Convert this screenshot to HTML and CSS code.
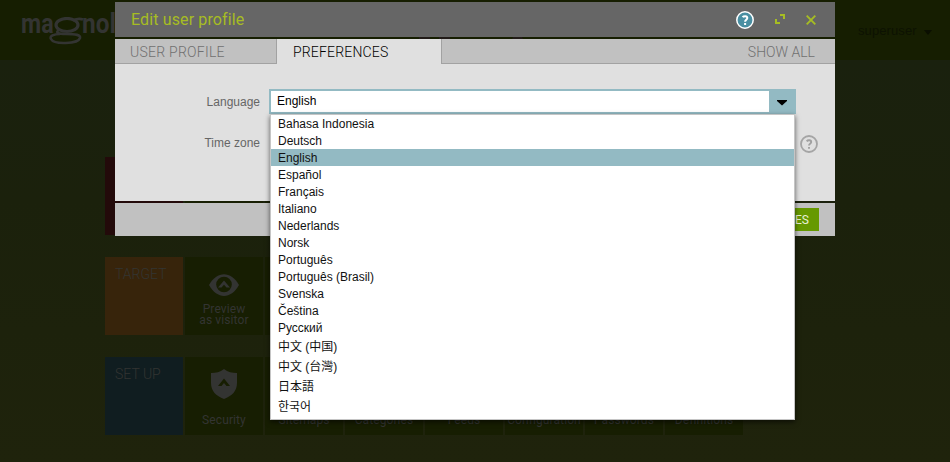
FILE: index.html
```html
<!DOCTYPE html>
<html lang="en">
<head>
<meta charset="utf-8">
<title>Edit user profile</title>
<link rel="stylesheet" href="styles.css">
</head>
<body>
<header class="topbar">
  <div class="logo" aria-label="magnolia"><span class="logo-ma">ma</span><span class="logo-g"><svg width="36" height="28" viewBox="0 0 36 28"><g fill="none" stroke="#333432"><ellipse cx="19" cy="8" rx="11" ry="6.500" stroke-width="3.200"/><path d="M25 3.500C28 2 32 1.500 35 2.500" stroke-width="2.600"/><path d="M11 13C7 15.500 10 17 18 17C28 17 33 18 32 21C30 27 6 28 3 22C1 19 6 17 12 17" stroke-width="2.600"/></g></svg></span><span class="logo-rest">nolia</span></div>
  <div class="shell-icons"><i></i><i></i><i></i></div>
  <div class="user">superuser<span class="caret"></span></div>
</header>
<main class="launcher">
  <section class="row">
    <div class="tile edit"></div><div class="tile"></div><div class="tile"></div>
  </section>
  <section class="row">
    <div class="tile group target">TARGET</div>
    <div class="tile"><svg class="icon" width="30" height="22" viewBox="0 0 30 22"><path d="M0 11C8-3.500 22-3.500 30 11C22 25.500 8 25.500 0 11Z" fill="#333432"/><circle cx="15" cy="10.500" r="7.800" fill="#171e02"/><path d="M9 13.500L15 6.500L21 13.500H17.500L15 10.800L12.500 13.500Z" fill="#333432"/></svg><span>Preview</span><span>as visitor</span></div>
    <div class="tile"></div>
  </section>
  <section class="row">
    <div class="tile group setup">SET UP</div>
    <div class="tile single"><svg class="icon" width="26" height="30" viewBox="0 0 26 30"><path d="M13 0C9 3 5 4 0 4V14C0 22 5 27 13 30C21 27 26 22 26 14V4C21 4 17 3 13 0Z" fill="#333432"/><path d="M7 17L13 9.500L19 17H15.500L13 14L10.500 17Z" fill="#171e02"/></svg><span>Security</span></div>
    <div class="tile single"><span>Sitemaps</span></div>
    <div class="tile single"><span>Categories</span></div>
    <div class="tile single"><span>Feeds</span></div>
    <div class="tile single"><span>Configuration</span></div>
    <div class="tile single"><span>Passwords</span></div>
    <div class="tile single"><span>Definitions</span></div>
  </section>
</main>
<div class="dialog" role="dialog">
  <div class="dialog-head">
    <h1>Edit user profile</h1>
    <svg class="help" width="18" height="18" viewBox="0 0 18 18"><circle cx="9" cy="9" r="8.200" fill="#4a8fa2" stroke="#fff" stroke-width="1.500"/><path d="M6.600 6.200C7.600 4.900 11.300 4.500 11.300 7C11.300 8.700 9.100 8.800 9.100 10.700M9.100 12.100V13.900" fill="none" stroke="#fff" stroke-width="2"/></svg>
    <svg class="expand" width="10" height="10" viewBox="0 0 10 10"><path d="M5 1H9V5M1 5V9H5" fill="none" stroke="#a6bd23" stroke-width="2"/></svg>
    <svg class="close" width="10" height="10" viewBox="0 0 10 10"><path d="M.7.700L9.300 9.300M9.300.700L.7 9.300" fill="none" stroke="#a6bd23" stroke-width="1.900"/></svg>
  </div>
  <nav class="tabs"><div class="tab profile">USER PROFILE</div><div class="tab active">PREFERENCES</div><div class="tab all">SHOW ALL</div></nav>
  <div class="form">
    <div class="field"><label>Language</label>
      <div class="select"><span>English</span><b><svg width="10" height="6" viewBox="0 0 10 6"><path d="M0 0H10V1L5 5.500L0 1Z"/></svg></b>
        <ul class="menu">
          <li>Bahasa Indonesia</li><li>Deutsch</li><li class="selected">English</li><li>Español</li><li>Français</li><li>Italiano</li><li>Nederlands</li><li>Norsk</li><li>Português</li><li>Português (Brasil)</li><li>Svenska</li><li>Čeština</li><li>Русский</li>
          <li class="cjk" lang="zh-CN">中文 (中国)</li><li class="cjk" lang="zh-TW">中文 (台灣)</li><li class="cjk" lang="ja">日本語</li><li class="cjk" lang="ko">한국어</li>
        </ul>
      </div>
    </div>
    <div class="field zone"><label>Time zone</label>
      <svg class="hint" width="18" height="18" viewBox="0 0 18 18"><circle cx="9" cy="9" r="8" fill="none" stroke="#a5a5a5" stroke-width="1.800"/><path d="M6.700 6.300C7.700 5 11.200 4.700 11.200 7C11.200 8.600 9 8.700 9 10.600M9 12V13.700" fill="none" stroke="#a0a0a0" stroke-width="1.900"/></svg>
    </div>
  </div>
  <footer class="actions"><button>SAVE CHANGES</button></footer>
</div>
</body>
</html>
```

FILE: styles.css
```css
* { box-sizing: border-box; }
body { margin: 0; height: 462px; overflow: hidden; position: relative; font-family: Roboto, sans-serif; background: linear-gradient(#1a210e 60px, #1b210c 200px, #1f230c 462px); }

/* Dimmed page behind the dialog */
.topbar { height: 60px; background: #161e01; display: flex; justify-content: space-between; color: #333432; }
.logo { display: flex; align-items: flex-start; padding: 4px 0 0 21px; font: 700 28px/39px Roboto, sans-serif; width: 140px; }
.logo-ma { width: 27px; transform: scaleX(.83); transform-origin: left; }
.logo-rest { transform: scaleX(.87); transform-origin: left; }
.logo-g { display: flex; width: 34px; padding-top: 13px; }
.logo-g svg { flex: none; }
.shell-icons { display: flex; gap: 9px; padding-top: 36px; width: 160px; }
.shell-icons i { width: 11px; height: 4px; background: #211b18; }
.shell-icons i:last-child { margin-left: 53px; border-radius: 6px 6px 0 0; }
.user { width: 92px; padding-top: 23px; font: 13px/15px "Liberation Sans", sans-serif; color: #0d1202; white-space: nowrap; letter-spacing: .1px; }
.caret { display: inline-block; margin-left: 7px; border: 4px solid transparent; border-top: 5px solid #0b0f01; border-bottom: 0; }
.launcher { padding: 97px 0 0 105px; display: grid; gap: 22px; }
.row { display: flex; gap: 2px; }
.tile { width: 78px; height: 78px; background: #171e02; color: #333432; font-size: 12px; line-height: 11px; letter-spacing: .1px; text-align: center; display: flex; flex-direction: column; align-items: center; justify-content: flex-end; padding-bottom: 9px; }
.tile .icon { margin-bottom: 8px; }
.single .icon { margin-bottom: 16px; }
.tile.edit { background: #230a0a; }
.tile.group { justify-content: flex-start; align-items: flex-start; padding: 9px 10px; font-size: 14px; line-height: 17px; font-weight: 300; letter-spacing: 0; }
.target { background: #37240b; }
.setup { background: #101d20; }

.dialog { position: absolute; left: 115px; top: 2px; width: 720px; }
.dialog-head { height: 35px; background: #666; display: flex; align-items: center; padding: 0 19px 0 16px; }
h1 { margin: 0; flex: 1; font-size: 16px; font-weight: 400; letter-spacing: .13px; color: #a6bd23; }
.expand { margin: -1px 21px 0 21px; }
.tabs { height: 25px; margin-top: 2px; display: flex; background: #c1c1c1; font-size: 14px; font-weight: 300; line-height: 27px; color: #707070; }
.tab { border-bottom: 1px solid #a2a2a2; }
.profile { width: 162px; padding-left: 15px; border-right: 1px solid #a2a2a2; letter-spacing: .25px; }
.active { width: 165px; padding-left: 16px; border-right: 1px solid #a2a2a2; border-bottom: 0; background: #e0e0e0; color: #000; letter-spacing: .18px; }
.all { flex: 1; padding-right: 20px; text-align: right; }
.form { height: 137px; background: #e0e0e0; padding-top: 25px; font: 12px/14px "Liberation Sans", sans-serif; color: #666; }
.field { display: flex; align-items: center; height: 25px; }
.field label { width: 145px; margin-right: 9px; text-align: right; }
.select { position: relative; width: 527px; height: 25px; border: 2px solid #93bac3; background: #fff; color: #000; display: flex; }
.select span { flex: 1; padding: 3px 6px; }
.select b { width: 25px; background: #93bac3; display: flex; align-items: center; justify-content: center; padding: 2px 0 0 1px; }
.zone { margin-top: 17px; height: 24px; }
.hint { margin: 2px 0 0 531px; }
.menu { position: absolute; z-index: 1; left: -1px; top: 23px; width: 525px; height: 306px; margin: 0; padding: 0; list-style: none; background: #fff; border: 1px solid #c5c5c5; box-shadow: 0 2px 5px rgba(0,0,0,.6); }
.menu li { height: 17px; line-height: 19px; padding-left: 7px; color: #111; }
.menu .selected { background: #93bac3; }
.menu .cjk { height: 20px; line-height: 22px; font-family: "Liberation Sans", "Noto Sans CJK SC", sans-serif; }
.menu .cjk:lang(zh-TW) { font-family: "Liberation Sans", "Noto Sans CJK TC", sans-serif; }
.menu .cjk:lang(ja) { font-family: "Liberation Sans", "Noto Sans CJK JP", sans-serif; }
.menu .cjk:lang(ko) { font-family: "Liberation Sans", "Noto Sans CJK KR", sans-serif; }
.actions { height: 33px; margin-top: 2px; background: #c1c1c1; display: flex; justify-content: flex-end; padding: 5px 16px; }
.actions button { height: 23px; border: 0; padding: 0 10px; background: #690; color: #e8f0d5; font: 12px/25px Roboto, sans-serif; }
```
